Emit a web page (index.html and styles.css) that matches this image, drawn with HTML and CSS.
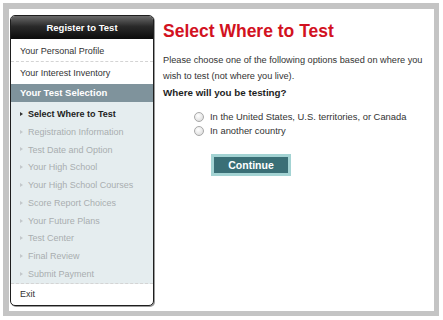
FILE: index.html
```html
<!DOCTYPE html>
<html lang="en">
<head>
    <meta charset="UTF-8">
    <title>Register to Test - Select Where to Test</title>
    <link rel="stylesheet" href="styles.css">
</head>
<body>

    <!-- DIŞ ÇERÇEVE -->
    <div class="frame">

        <!-- SOL MENÜ -->
        <aside class="sidebar">
            <div class="side-head">Register to Test</div>
            <ul class="side-menu">
                <li class="side-item first">Your Personal Profile</li>
                <li class="side-item second">Your Interest Inventory</li>
                <li class="side-section">Your Test Selection</li>
                <li class="side-steps">
                    <ul class="steps">
                        <li class="step current">Select Where to Test</li>
                        <li class="step">Registration Information</li>
                        <li class="step">Test Date and Option</li>
                        <li class="step">Your High School</li>
                        <li class="step">Your High School Courses</li>
                        <li class="step">Score Report Choices</li>
                        <li class="step">Your Future Plans</li>
                        <li class="step">Test Center</li>
                        <li class="step">Final Review</li>
                        <li class="step">Submit Payment</li>
                    </ul>
                </li>
                <li class="side-item exit">Exit</li>
            </ul>
        </aside>

        <!-- İÇERİK -->
        <main class="content">
            <h1 class="page-title">Select Where to Test</h1>
            <p class="intro">Please choose one of the following options based on where you wish to test (not where you live).</p>
            <p class="question">Where will you be testing?</p>

            <div class="options">
                <label class="option"><input type="radio" name="where"> In the United States, U.S. territories, or Canada</label>
                <label class="option"><input type="radio" name="where"> In another country</label>
            </div>

            <button class="continue-btn">Continue</button>
        </main>
    </div>

</body>
</html>
```

FILE: styles.css
```css
/* GENEL */
* {
    margin: 0;
    padding: 0;
    box-sizing: border-box;
    font-family: "Liberation Sans", Arial, sans-serif;
}

body {
    background-color: #ffffff;
    color: #333333;
}

/* DIŞ ÇERÇEVE */
.frame {
    margin: 3px 0 0 3px;
    width: 436px;
    height: 313px;
    border: 6px solid #c4c4c4;
    border-right-width: 5px;
    border-bottom-width: 5px;
    display: flex;
    align-items: flex-start;
    padding: 6px 0 0 1px;
}

/* SOL MENÜ */
.sidebar {
    width: 144px;
    flex: 0 0 144px;
    border: 1px solid #1e1e1e;
    border-radius: 5px;
    overflow: hidden;
    box-shadow: 1px 1px 0 #9a9a9a;
    background-color: #ffffff;
}

.side-head {
    height: 23px;
    line-height: 23px;
    text-align: center;
    color: #ffffff;
    font-size: 9.5px;
    font-weight: bold;
    background: linear-gradient(#6a6a6a, #2a2a2a 45%, #0c0c0c);
}

.side-menu {
    list-style: none;
}

.side-item {
    font-size: 9px;
    color: #333333;
    padding-left: 9px;
}

.side-item.first {
    height: 23px;
    padding-top: 2px;
    line-height: 20px;
    border-bottom: 1px dashed #d4d4d4;
}

.side-item.second {
    height: 22px;
    line-height: 22px;
}

.side-section {
    height: 18px;
    line-height: 18px;
    padding-left: 9px;
    font-size: 9.5px;
    font-weight: bold;
    color: #ffffff;
    background-color: #7f939c;
}

.side-steps {
    background-color: #e5edef;
    padding: 3px 0 0 9px;
    border-bottom: 1px dashed #d4d4d4;
}

.steps {
    list-style: none;
}

.step {
    height: 17.8px;
    line-height: 18px;
    font-size: 9px;
    color: #a9adb0;
    display: flex;
    align-items: center;
    gap: 5px;
}

/* ADIM OKU */
.step::before {
    content: "";
    width: 0;
    height: 0;
    border-top: 2.5px solid transparent;
    border-bottom: 2.5px solid transparent;
    border-left: 3.5px solid #c3c8cb;
}

.step.current {
    color: #222222;
    font-weight: bold;
}

.step.current::before {
    border-left-color: #333333;
}

.side-item.exit {
    height: 21px;
    line-height: 21px;
}

/* İÇERİK */
.content {
    flex: 1;
    padding: 6px 0 0 9px;
}

.page-title {
    font-size: 17.5px;
    line-height: 20px;
    color: #d2121f;
}

.intro {
    margin-top: 11px;
    font-size: 9.2px;
    line-height: 16px;
}

.question {
    margin-top: 2px;
    font-size: 9.8px;
    line-height: 14px;
    font-weight: bold;
    color: #1e1e1e;
}

.options {
    margin-top: 10px;
    padding-left: 31px;
    display: flex;
    flex-direction: column;
}

.option {
    font-size: 9.4px;
    line-height: 14px;
    display: flex;
    align-items: center;
    gap: 6px;
}

.option input {
    appearance: none;
    width: 10px;
    height: 10px;
    border-radius: 50%;
    border: 1px solid #a8a8a8;
    background: radial-gradient(circle at 40% 35%, #ffffff, #d6d6d6);
}

.continue-btn {
    margin: 16px 0 0 48px;
    width: 80px;
    height: 22px;
    border: 3px solid #a3d3d3;
    background-color: #3a6f76;
    color: #ffffff;
    font-size: 10.5px;
    font-weight: bold;
    cursor: pointer;
}
```
